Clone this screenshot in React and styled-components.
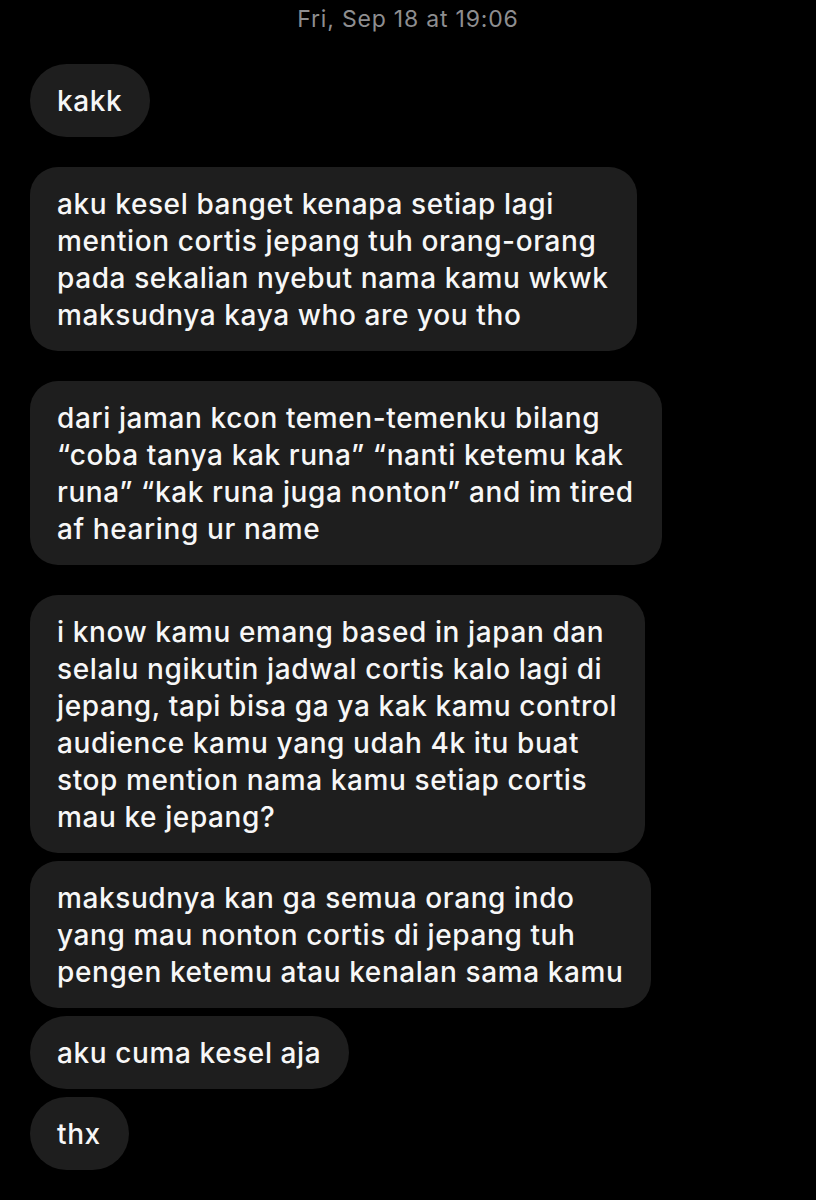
import React from 'react';
import styled, { createGlobalStyle } from 'styled-components';

const GlobalStyle = createGlobalStyle`
	html, body {
		margin: 0;
		padding: 0;
		background: #000;
	}
	body {
		font-family: Inter, "Noto Sans", "Liberation Sans", sans-serif;
		-webkit-font-smoothing: antialiased;
	}
`;

const Screen = styled.div`
	width: 816px;
	height: 1200px;
	background: #000;
	overflow: hidden;
	display: flex;
	flex-direction: column;
	align-items: flex-start;
	padding: 0 30px;
	box-sizing: border-box;
`;

const Timestamp = styled.div`
	align-self: stretch;
	text-align: center;
	color: #8e8e90;
	font-size: 23px;
	letter-spacing: 0.8px;
	line-height: 28px;
	padding-top: 5px;
	margin-bottom: 31px;
`;

const Group = styled.div`
	display: flex;
	flex-direction: column;
	align-items: flex-start;
	gap: 8px;
	margin-bottom: 30px;
`;

const Bubble = styled.div`
	background: #1e1e1e;
	color: #f7f7f7;
	font-size: 28px;
	font-weight: 500;
	letter-spacing: 0.6px;
	line-height: 37px;
	padding: 19px 28px 17px 27px;
	border-radius: ${p => (p.$pill ? '37px' : '28px')};
`;

const messages = [
	[['kakk']],
	[[
		'aku kesel banget kenapa setiap lagi',
		'mention cortis jepang tuh orang-orang',
		'pada sekalian nyebut nama kamu wkwk',
		'maksudnya kaya who are you tho',
	]],
	[[
		'dari jaman kcon temen-temenku bilang',
		'“coba tanya kak runa” “nanti ketemu kak',
		'runa” “kak runa juga nonton” and im tired',
		'af hearing ur name',
	]],
	[
		[
			'i know kamu emang based in japan dan',
			'selalu ngikutin jadwal cortis kalo lagi di',
			'jepang, tapi bisa ga ya kak kamu control',
			'audience kamu yang udah 4k itu buat',
			'stop mention nama kamu setiap cortis',
			'mau ke jepang?',
		],
		[
			'maksudnya kan ga semua orang indo',
			'yang mau nonton cortis di jepang tuh',
			'pengen ketemu atau kenalan sama kamu',
		],
		['aku cuma kesel aja'],
		['thx'],
	],
];

function App() {
	return (
		<>
			<GlobalStyle />
			<Screen>
				<Timestamp>Fri, Sep 18 at 19:06</Timestamp>
				{messages.map((group, gi) => (
					<Group key={gi}>
						{group.map((lines, bi) => (
							<Bubble key={bi} $pill={lines.length === 1}>
								{lines.map((line, li) => (
									<React.Fragment key={li}>
										{line}
										{li < lines.length - 1 && <br />}
									</React.Fragment>
								))}
							</Bubble>
						))}
					</Group>
				))}
			</Screen>
		</>
	);
}

export default App;
